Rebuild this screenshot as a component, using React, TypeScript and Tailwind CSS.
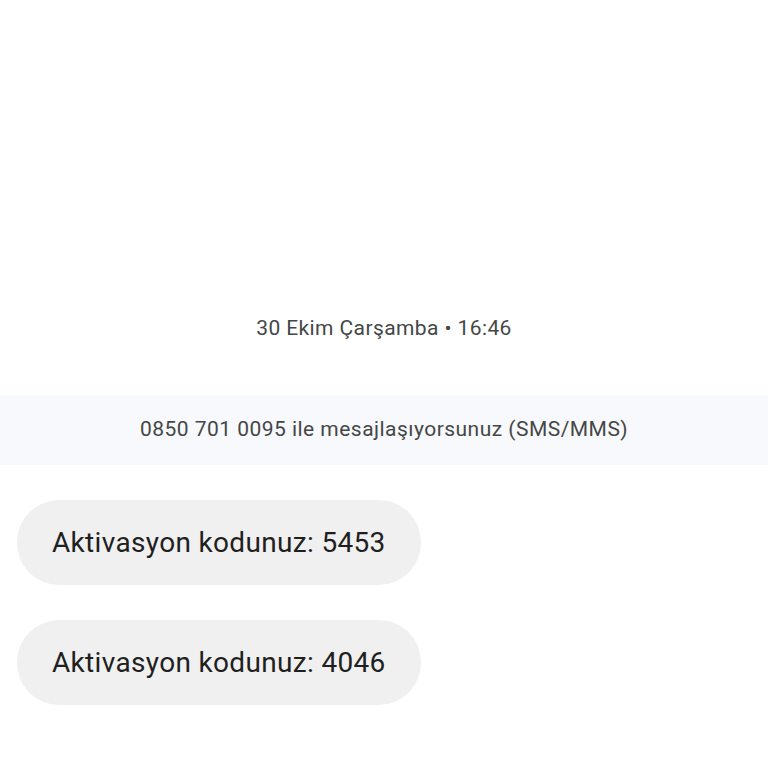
export default function App() {
  const messages = ['Aktivasyon kodunuz: 5453', 'Aktivasyon kodunuz: 4046'];
  return (
    <div
      className="flex min-h-[768px] w-full flex-col bg-white"
      style={{ fontFamily: 'Roboto, "Noto Sans", sans-serif' }}
    >
      <div className="pt-[315px] text-center text-[21px] leading-[26px] tracking-[0.4px] text-[#444746]">
        30 Ekim Çarşamba • 16:46
      </div>
      <div className="mt-[54px] flex h-[70px] items-center justify-center bg-[#f8f9fc] text-[21px] tracking-[0.47px] text-[#444746]">
        0850 701 0095 ile mesajlaşıyorsunuz (SMS/MMS)
      </div>
      <div className="mt-[35px] flex flex-col items-start gap-[35px] px-[17px]">
        {messages.map((m) => (
          <div
            key={m}
            className="flex h-[85px] items-center rounded-[42px] bg-[#f0f0f0] px-[35px] text-[28px] tracking-[0.33px] text-[#1f1f1f]"
          >
            {m}
          </div>
        ))}
      </div>
    </div>
  );
}
